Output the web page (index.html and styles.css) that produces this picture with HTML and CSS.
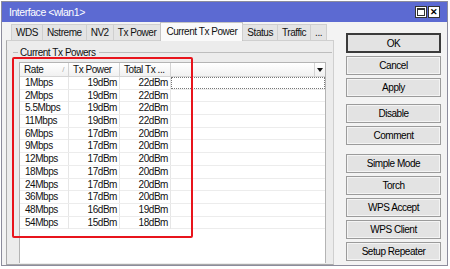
FILE: index.html
```html
<!DOCTYPE html>
<html lang="en">
<head>
  <meta charset="UTF-8">
  <title>Interface &lt;wlan1&gt;</title>
  <link rel="stylesheet" href="styles.css">
</head>
<body>
  <div class="window">
    <div class="titlebar">
      <span class="title">Interface &lt;wlan1&gt;</span>
      <div class="wbtns">
        <span class="wbtn max"><i></i></span>
        <span class="wbtn close">&#x2715;</span>
      </div>
    </div>

    <div class="content">
      <div class="main">
        <div class="tabs">
          <span class="tab">WDS</span>
          <span class="tab">Nstreme</span>
          <span class="tab">NV2</span>
          <span class="tab">Tx Power</span>
          <span class="tab active">Current Tx Power</span>
          <span class="tab">Status</span>
          <span class="tab">Traffic</span>
          <span class="tab">...</span>
        </div>

        <div class="page">
          <div class="group"><span>Current Tx Powers</span></div>
          <div class="table">
            <div class="thead">
              <div class="th">Rate<span class="sort">/</span></div>
              <div class="th">Tx Power</div>
              <div class="th">Total Tx ...</div>
              <div class="th"></div>
              <div class="th menu"><i></i></div>
            </div>
            <div class="tr"><div class="td">1Mbps</div><div class="td num">19dBm</div><div class="td num">22dBm</div><div class="td focus"></div></div>
            <div class="tr"><div class="td">2Mbps</div><div class="td num">19dBm</div><div class="td num">22dBm</div><div class="td"></div></div>
            <div class="tr"><div class="td">5.5Mbps</div><div class="td num">19dBm</div><div class="td num">22dBm</div><div class="td"></div></div>
            <div class="tr"><div class="td">11Mbps</div><div class="td num">19dBm</div><div class="td num">22dBm</div><div class="td"></div></div>
            <div class="tr"><div class="td">6Mbps</div><div class="td num">17dBm</div><div class="td num">20dBm</div><div class="td"></div></div>
            <div class="tr"><div class="td">9Mbps</div><div class="td num">17dBm</div><div class="td num">20dBm</div><div class="td"></div></div>
            <div class="tr"><div class="td">12Mbps</div><div class="td num">17dBm</div><div class="td num">20dBm</div><div class="td"></div></div>
            <div class="tr"><div class="td">18Mbps</div><div class="td num">17dBm</div><div class="td num">20dBm</div><div class="td"></div></div>
            <div class="tr"><div class="td">24Mbps</div><div class="td num">17dBm</div><div class="td num">20dBm</div><div class="td"></div></div>
            <div class="tr"><div class="td">36Mbps</div><div class="td num">17dBm</div><div class="td num">20dBm</div><div class="td"></div></div>
            <div class="tr"><div class="td">48Mbps</div><div class="td num">16dBm</div><div class="td num">19dBm</div><div class="td"></div></div>
            <div class="tr"><div class="td">54Mbps</div><div class="td num">15dBm</div><div class="td num">18dBm</div><div class="td"></div></div>
          </div>
        </div>
      </div>

      <div class="side">
        <button class="btn default">OK</button>
        <button class="btn">Cancel</button>
        <button class="btn">Apply</button>
        <button class="btn sep">Disable</button>
        <button class="btn">Comment</button>
        <button class="btn sep2">Simple Mode</button>
        <button class="btn">Torch</button>
        <button class="btn">WPS Accept</button>
        <button class="btn">WPS Client</button>
        <button class="btn">Setup Repeater</button>
      </div>
    </div>

    <!-- annotation drawn over the table -->
    <div class="highlight"></div>
  </div>
</body>
</html>
```

FILE: styles.css
```css
* { margin: 0; padding: 0; box-sizing: border-box; }

body {
  background: #fff;
  font-family: "Liberation Sans", Arial, sans-serif;
  font-size: 10px;
  letter-spacing: -0.45px;
  color: #111;
}

.window {
  position: relative;
  margin: 1px 0 0 1px;
  width: 447px;
  height: 265px;
  border: 1px solid #8c8c9c;
  background: #f3f3f3;
}

.titlebar {
  height: 20px;
  background: #5c6ad2;
  color: #fff;
  display: flex;
  align-items: center;
  justify-content: space-between;
  padding: 0 7px 0 7px;
}

.title {
  font-size: 10.5px;
}

.wbtns {
  display: flex;
  gap: 1px;
}

.wbtn {
  width: 12px;
  height: 12px;
  background: #fff;
  border: 1px solid #333;
  display: flex;
  align-items: center;
  justify-content: center;
  color: #000;
  font-size: 9px;
  font-weight: bold;
  letter-spacing: 0;
}

.wbtn.max i {
  width: 8px;
  height: 8px;
  border: 1px solid #333;
  border-top-width: 2px;
}

.content {
  display: flex;
  padding-left: 4px;
  height: 243px;
}

.main {
  width: 328px;
  display: flex;
  flex-direction: column;
}

.tabs {
  display: flex;
  align-items: flex-end;
  height: 18px;
  padding-left: 5px;
  position: relative;
  z-index: 1;
}

.tab {
  flex-shrink: 0;
  white-space: nowrap;
  height: 16px;
  line-height: 15px;
  padding: 0 4px;
  background: #e4e4e4;
  border: 1px solid #cfcfcf;
  border-bottom: none;
  margin-right: -1px;
}

.tab.active {
  height: 19px;
  margin-bottom: -1px;
  padding: 0 5px;
  line-height: 17px;
  background: #fafafa;
  border-color: #c4c4c4;
}

.page {
  flex: 1;
  border: 1px solid #a9a9a9;
  border-top-color: #cfcfcf;
  border-right-color: #cfcfcf;
  background: #ececec;
  padding: 0 0 1px 12px;
  display: flex;
  flex-direction: column;
}

.group {
  display: flex;
  align-items: center;
  height: 20px;
  margin: 1px 1px 0 -6px;
  white-space: nowrap;
}

.group::before,
.group::after {
  content: "";
  height: 0;
  border-top: 1px solid #bdbdbd;
}

.group::before {
  flex: 0 0 5px;
  margin-right: 2px;
}

.group::after {
  flex: 1;
  margin-left: 3px;
}

.table {
  flex: 1;
  width: 307px;
  background: #fff;
  border: 1px solid #b4b4b4;
  border-bottom: none;
}

.thead,
.tr {
  display: grid;
  grid-template-columns: 49px 51px 51px 1fr;
}

.thead {
  grid-template-columns: 49px 51px 51px 1fr 10px;
  height: 14px;
  background: linear-gradient(#ffffff, #f1f1f1);
  border-bottom: 1px solid #d4d4d4;
}

.th {
  line-height: 13px;
  padding-left: 4px;
  border-right: 1px solid #d4d4d4;
  position: relative;
  white-space: nowrap;
}

.th.menu { border-right: none; padding: 0; display: flex; align-items: center; justify-content: center; }

.th.menu i {
  border-left: 3.5px solid transparent;
  border-right: 3.5px solid transparent;
  border-top: 4px solid #111;
  margin-top: 1px;
}

.sort {
  position: absolute;
  right: 4px;
  top: 0;
  color: #aaa;
  font-size: 8px;
}

.tr {
  height: 12.7px;
  border-bottom: 1px solid #ececec;
}

.td {
  line-height: 12px;
  padding-left: 5px;
  border-right: 1px solid #e6e6e6;
  white-space: nowrap;
}

.td.num {
  text-align: right;
  padding: 0 2px 0 0;
}

.td:last-child { border-right: none; }

.td.focus {
  border: 1px dotted #777;
}

.side {
  width: 95px;
  margin-left: 12px;
  padding-top: 11px;
  display: flex;
  flex-direction: column;
  gap: 3px;
}

.btn {
  height: 19px;
  font-family: inherit;
  font-size: 10px;
  letter-spacing: -0.45px;
  color: #000;
  background: #e3e3e3;
  border: 1px solid #9b9b9b;
  box-shadow: inset 0 0 0 1px #f4f4f4;
}

.btn.default {
  height: 20px;
  border: 2px solid #3b3b3b;
  box-shadow: none;
}

.btn.sep { margin-top: 4px; }
.btn.sep2 { margin-top: 6px; }

.highlight {
  position: absolute;
  left: 10px;
  top: 55px;
  width: 181px;
  height: 181px;
  border: 2px solid #e8141c;
  border-radius: 2px;
}
```
